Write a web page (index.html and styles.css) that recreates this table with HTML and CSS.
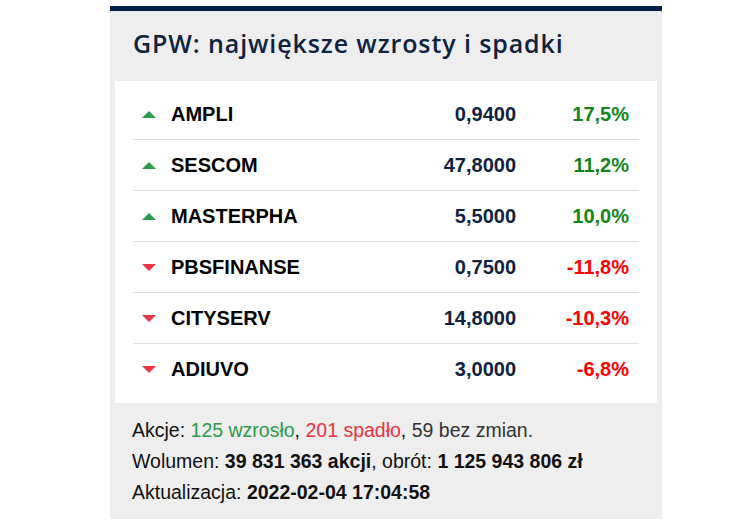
FILE: index.html
```html
<!DOCTYPE html>
<html lang="pl">
<head>
<meta charset="utf-8">
<title>GPW</title>
<link rel="stylesheet" href="styles.css">
</head>
<body>
<div class="page">
  <section class="card">
    <h2 class="title">GPW: największe wzrosty i spadki</h2>
    <div class="panel">
      <div class="row">
        <span class="arrow up"></span><span class="name">AMPLI</span><span class="price">0,9400</span><span class="pct pos">17,5%</span>
      </div>
      <div class="row">
        <span class="arrow up"></span><span class="name">SESCOM</span><span class="price">47,8000</span><span class="pct pos">11,2%</span>
      </div>
      <div class="row">
        <span class="arrow up"></span><span class="name">MASTERPHA</span><span class="price">5,5000</span><span class="pct pos">10,0%</span>
      </div>
      <div class="row">
        <span class="arrow down"></span><span class="name">PBSFINANSE</span><span class="price">0,7500</span><span class="pct neg">-11,8%</span>
      </div>
      <div class="row">
        <span class="arrow down"></span><span class="name">CITYSERV</span><span class="price">14,8000</span><span class="pct neg">-10,3%</span>
      </div>
      <div class="row">
        <span class="arrow down"></span><span class="name">ADIUVO</span><span class="price">3,0000</span><span class="pct neg">-6,8%</span>
      </div>
    </div>
    <div class="footer">
      <p>Akcje: <span class="g">125 wzrosło</span>, <span class="r">201 spadło</span>, <span class="n">59 bez zmian.</span></p>
      <p>Wolumen: <b>39 831 363 akcji</b>, obrót: <b>1 125 943 806 zł</b></p>
      <p>Aktualizacja: <b>2022-02-04 17:04:58</b></p>
    </div>
  </section>
</div>
</body>
</html>
```
FILE: styles.css
```css
html, body {
  margin: 0;
  padding: 0;
  background: #ffffff;
}
.page {
  padding: 6px 0 0 110px;
}
.card {
  width: 552px;
  box-sizing: border-box;
  background: #eeeeee;
  border-top: 5px solid #00204a;
  padding: 0 5px 11px;
}
.title {
  margin: 0;
  padding: 16px 18px 22px;
  font-family: "Open Sans", sans-serif;
  font-weight: 600;
  font-size: 25px;
  letter-spacing: 0.9px;
  line-height: 32px;
  color: #0f223f;
  white-space: nowrap;
}
.panel {
  background: #ffffff;
  padding: 8px 18px 9px;
}
.row {
  display: flex;
  align-items: center;
  height: 50px;
  border-bottom: 1px solid #e0e0e0;
  font-family: "Liberation Sans", Arial, sans-serif;
  font-weight: 700;
  font-size: 20px;
  padding-right: 10px;
}
.row:last-child {
  border-bottom: none;
}
.arrow {
  width: 0;
  height: 0;
  margin-left: 9px;
  margin-right: 15px;
  border-left: 7px solid transparent;
  border-right: 7px solid transparent;
}
.arrow.up {
  border-bottom: 7px solid #2e9a4c;
}
.arrow.down {
  border-top: 7px solid #ea3440;
}
.name {
  flex: 1;
  color: #000000;
}
.price {
  color: #0f223f;
  text-align: right;
}
.pct {
  width: 113px;
  text-align: right;
}
.pct.pos {
  color: #13861a;
}
.pct.neg {
  color: #ff0000;
}
.footer {
  padding: 12px 17px 0;
  font-family: "Liberation Sans", Arial, sans-serif;
  font-size: 19.5px;
  line-height: 31px;
  color: #111111;
}
.footer p {
  margin: 0;
}
.footer b {
  font-weight: 700;
}
.footer .g {
  color: #2e9a4c;
}
.footer .r {
  color: #e8343e;
}
.footer .n {
  color: #333333;
}
```
